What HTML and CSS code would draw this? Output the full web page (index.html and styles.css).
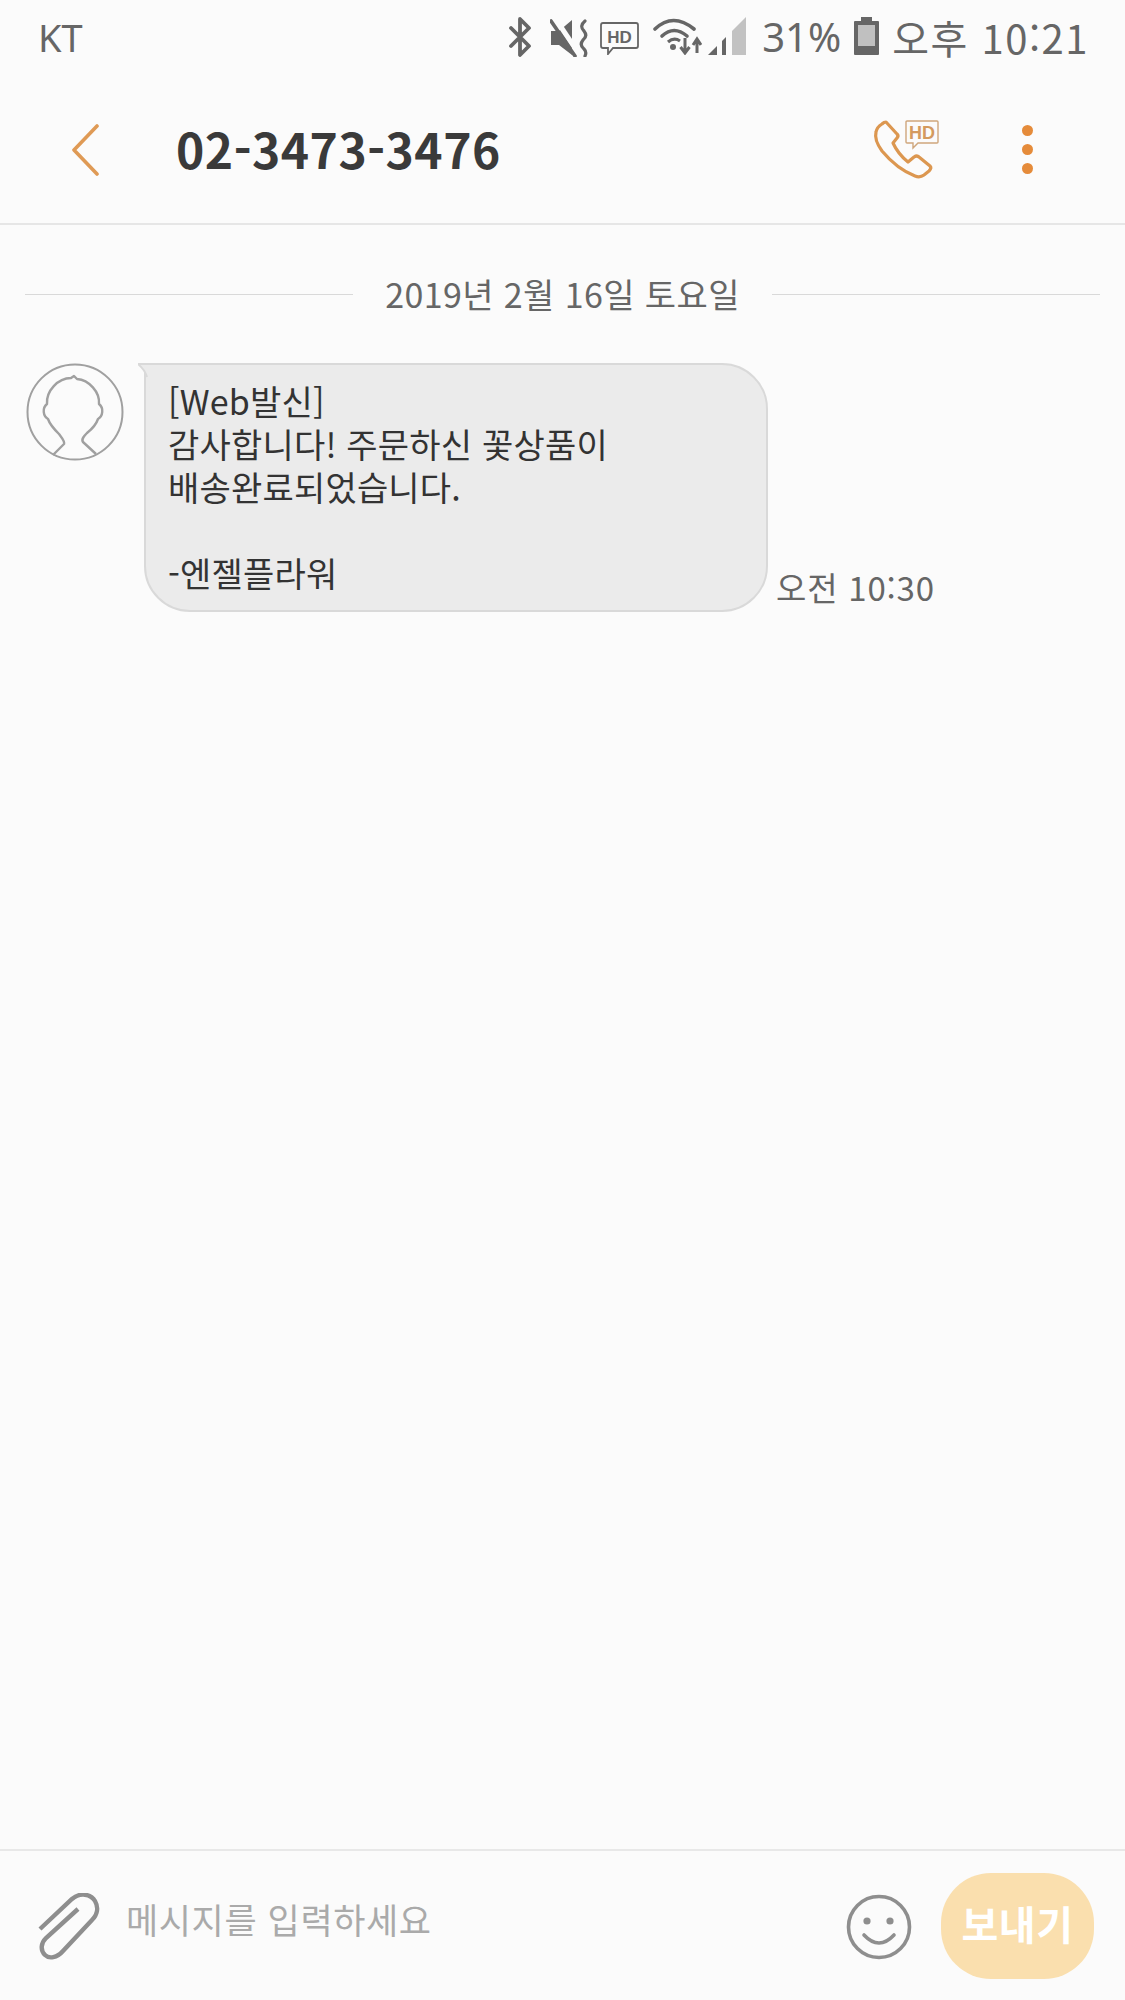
FILE: index.html
```html
<!DOCTYPE html>
<html lang="ko">
<head>
<meta charset="utf-8">
<title>02-3473-3476</title>
<link rel="stylesheet" href="styles.css">
</head>
<body>
<div class="screen">
  <div class="status">
    <span class="carrier">KT</span>
    <div class="status-right">
      <svg class="si si-bt" viewBox="0 0 25 40"><path d="M3 11 L21 29 L12 38 V2 L21 11 L3 29" fill="none" stroke="#666" stroke-width="3.8" stroke-linecap="round" stroke-linejoin="round"/></svg>
      <svg class="si si-mute" viewBox="0 0 39 38"><path d="M1 12 H9 L22 1 V36 L9 26 H1Z" fill="#666"/><path d="M5 -1 L31 38" stroke="#fbfbfb" stroke-width="5"/><path d="M1 2 L25 37" stroke="#666" stroke-width="3.6" stroke-linecap="round"/><path d="M35 2 Q29 7 34 12 Q38 17 33 21 Q29 26 34 30 Q37 33 35 37" fill="none" stroke="#666" stroke-width="3.2" stroke-linecap="round"/></svg>
      <svg class="si si-hd" viewBox="0 0 39 33"><path d="M3 1 H36 Q38 1 38 3 V24 Q38 26 36 26 H13 L8 32 V26 H3 Q1 26 1 24 V3 Q1 1 3 1Z" fill="none" stroke="#666" stroke-width="1.8"/><text x="19.5" y="20.500" text-anchor="middle" class="hd-text">HD</text></svg>
      <svg class="si si-wifi" viewBox="0 0 49 38"><path d="M2 12 Q20 -5 41 12" fill="none" stroke="#666" stroke-width="3.6" stroke-linecap="round"/><path d="M9 19 Q21 8 34 19" fill="none" stroke="#666" stroke-width="3.6" stroke-linecap="round"/><path d="M15 25 Q21 20 27 24" fill="none" stroke="#666" stroke-width="3.2"/><circle cx="20" cy="30" r="3" fill="#666"/><path d="M32 21 V35 M27.500 30 L32 36 L36.500 30" fill="none" stroke="#666" stroke-width="3"/><path d="M44 36 V24 M40 28 L44 22 L48 28" fill="none" stroke="#666" stroke-width="3"/></svg>
      <svg class="si si-signal" viewBox="0 0 38 38"><path d="M0 38 L9 29 V38Z" fill="#666"/><path d="M14 24 L18 20 V38 H14Z" fill="#666"/><path d="M24 14 L38 0 V38 H24Z" fill="#c2c2c2"/></svg>
      <span class="pct">31%</span>
      <svg class="si si-batt" viewBox="0 0 25 38"><path d="M7 0 H18 V4 H24 Q25 4 25 5 V37 Q25 38 24 38 H1 Q0 38 0 37 V5 Q0 4 1 4 H7Z" fill="#666"/><rect x="4" y="8" width="17" height="21" fill="#c0c0c0"/></svg>
      <span class="clock">오후 10:21</span>
    </div>
  </div>

  <header class="bar">
    <svg class="back" viewBox="0 0 28 52"><path d="M26 2 L3 26 L26 50" fill="none" stroke="#df9a55" stroke-width="3.6" stroke-linecap="round" stroke-linejoin="round"/></svg>
    <h1 class="title">02-3473-3476</h1>
    <svg class="call" viewBox="0 0 70 64">
      <path d="M15 4 L26 16 Q28 18 26 20 L22 25 Q27 36 37 44 L43 39 Q46 37 48 39 L59 48 Q61 50 58 53 L53 57 Q49 60 44 58 Q26 51 11 33 Q3 22 5 14 Q6 9 11 6 Q13 4 15 4Z" fill="none" stroke="#dc9750" stroke-width="3.2" stroke-linejoin="round"/>
      <path d="M36 3 H66 Q67 3 67 4 V24 Q67 25 66 25 H47 L42 30 V25 H36 Q35 25 35 24 V4 Q35 3 36 3Z" fill="#fbfbfb" stroke="#cfa67c" stroke-width="1.4"/>
      <text x="51" y="21" text-anchor="middle" class="call-hd">HD</text>
    </svg>
    <div class="more"><i></i><i></i><i></i></div>
  </header>

  <main class="thread">
    <div class="date-row">
      <span class="date-line"></span>
      <span class="date">2019년 2월 16일 토요일</span>
      <span class="date-line"></span>
    </div>
    <div class="msg">
      <svg class="avatar" viewBox="0 0 98 98">
        <circle cx="49" cy="49" r="47.500" fill="#fbfbfb" stroke="#a0a0a0" stroke-width="2"/>
        <path d="M27 92 L38 81 C39 78 36 75 33 71 C28 66 24 62 22 56 C17 53 16 45 21 41 C20 28 32 15 45 15 L48 13 L51 16 C63 17 74 29 73 41 C78 45 77 53 72 56 C70 62 66 66 61 70 C58 73 55 76 57 79 L70 91" fill="none" stroke="#a0a0a0" stroke-width="2.400" stroke-linejoin="round"/>
      </svg>
      <div class="bubble">
        <svg class="tail" viewBox="0 0 12 30"><path d="M0 1 H12 V30 Q11 10 0 1Z" fill="#ebebeb"/><path d="M12 1 H0 Q7 7 9 14" fill="none" stroke="#d9d9d9" stroke-width="2"/></svg>
        <p class="msg-text">[Web발신]<br>감사합니다! 주문하신 꽃상품이<br>배송완료되었습니다.<br><br>-엔젤플라워</p>
      </div>
      <span class="msg-time">오전 10:30</span>
    </div>
  </main>

  <footer class="composer">
    <svg class="clip" viewBox="0 0 62 68"><path d="M2 36 L34 6 C42 -1 53 1 57 8 C61 15 59 22 54 27 L25 58 C19 65 11 66 7 62 C2 57 3 50 8 45 L40 16" fill="none" stroke="#8e8e8e" stroke-width="4.400"/></svg>
    <span class="placeholder">메시지를 입력하세요</span>
    <svg class="smile" viewBox="0 0 66 66"><circle cx="33" cy="33" r="30.500" fill="none" stroke="#8e8e8e" stroke-width="3.600"/><circle cx="21" cy="27" r="3.600" fill="#8e8e8e"/><circle cx="44" cy="27" r="3.600" fill="#8e8e8e"/><path d="M18 41 Q33 57 48 41" fill="none" stroke="#8e8e8e" stroke-width="3.600" stroke-linecap="round"/></svg>
    <button class="send">보내기</button>
  </footer>
</div>
</body>
</html>
```
FILE: styles.css
```css
* { box-sizing: border-box; }
html, body { margin: 0; padding: 0; }
body { background: #fbfbfb; font-family: "Noto Sans CJK KR", "Noto Sans", sans-serif; }
.screen { width: 1125px; height: 2000px; display: flex; flex-direction: column; background: #fbfbfb; overflow: hidden; }

.status { height: 80px; flex: none; display: flex; align-items: flex-start; justify-content: space-between; padding: 17px 36px 0 38px; color: #666; }
.carrier { font-size: 38px; line-height: 40px; font-family: "Noto Sans", sans-serif; }
.status-right { display: flex; align-items: flex-start; }
.si { display: block; flex: none; }
.si-bt { width: 25px; height: 40px; }
.si-mute { width: 39px; height: 38px; margin: 2px 0 0 17px; }
.si-hd { width: 39px; height: 33px; margin: 5px 0 0 11px; }
.si-wifi { width: 49px; height: 38px; margin-left: 14px; }
.si-signal { width: 38px; height: 38px; margin-left: 6px; }
.si-batt { width: 25px; height: 38px; margin-left: 13px; }
.pct { font-size: 40px; line-height: 40px; margin-left: 16px; font-family: "Noto Sans", sans-serif; }
.clock { font-size: 40px; line-height: 40px; margin-left: 13px; letter-spacing: 1.5px; white-space: nowrap; }
.hd-text { font: 700 17px "Liberation Sans", sans-serif; fill: #666; }

.bar { height: 145px; flex: none; display: flex; align-items: center; border-bottom: 2px solid #e6e6e6; padding: 0 0 4px 71px; }
.back { width: 28px; height: 52px; flex: none; }
.title { margin: 0 0 4px 77px; flex: 1; font-size: 48px; line-height: 60px; font-weight: 700; color: #3a3a3a; letter-spacing: 0.5px; }
.call { width: 70px; height: 64px; flex: none; }
.call-hd { font: 700 18px "Liberation Sans", sans-serif; fill: #d49a5e; }
.more { width: 11px; display: flex; flex-direction: column; gap: 8px; margin: 0 92px 0 81px; flex: none; }
.more i { display: block; width: 11px; height: 11px; border-radius: 50%; background: #e58b3a; }

.thread { flex: 1; padding: 49px 25px 0 26px; }
.date-row { display: flex; align-items: center; gap: 32px; height: 40px; margin-left: -1px; }
.date-line { flex: 1; height: 1px; background: #d9d9d9; }
.date { font-size: 34px; line-height: 40px; letter-spacing: 0.4px; color: #666; white-space: nowrap; }

.msg { display: flex; align-items: flex-end; margin-top: 49px; }
.avatar { width: 98px; height: 98px; flex: none; align-self: flex-start; }
.bubble { position: relative; width: 624px; height: 249px; margin-left: 20px; background: #ebebeb; border: 2px solid #d9d9d9; border-radius: 0 46px 46px 46px; padding: 14px 22px; }
.tail { position: absolute; left: -8px; top: -2px; width: 12px; height: 30px; }
.msg-text { margin: 0; font-size: 34px; line-height: 43px; letter-spacing: 0.2px; color: #333; white-space: nowrap; }
.msg-time { margin: 0 0 5px 8px; font-size: 33px; line-height: 40px; letter-spacing: 0.8px; color: #666; white-space: nowrap; }

.composer { height: 151px; flex: none; display: flex; align-items: center; border-top: 2px solid #e8e8e8; padding: 0 31px 0 38px; }
.clip { width: 62px; height: 68px; flex: none; margin-top: 2px; }
.placeholder { flex: 1; margin: 0 0 14px 26px; font-size: 35px; letter-spacing: 0.6px; color: #aaa; white-space: nowrap; }
.smile { width: 66px; height: 66px; flex: none; margin: 2px 0 0 -1px; }
.send { width: 153px; height: 106px; flex: none; margin-left: 29px; border: 0; border-radius: 50px; background: #fadfae; color: #fff; font: 700 40px "Noto Sans CJK KR", sans-serif; letter-spacing: 0.6px; padding: 0 0 6px; }
```
